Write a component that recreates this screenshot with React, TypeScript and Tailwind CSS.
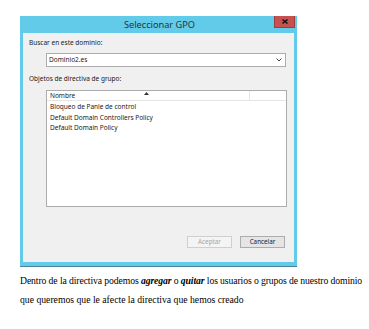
export default function App() {
  const rows = ['Bloqueo de Panle de control', 'Default Domain Controllers Policy', 'Default Domain Policy'];

  return (
    <div className="w-[369px] h-[329px] bg-white pt-[16px] pl-[20px] overflow-hidden">
      {/* dialog */}
      <div className="w-[277px] h-[251px] bg-[#62cbea] border-b border-[#4c8397] flex flex-col px-[3px] pb-[4px] font-['Noto_Sans',sans-serif]">
        <div className="h-[17px] flex items-center relative">
          <div className="flex-1 text-center text-[9.2px] text-[#26343c] leading-none pl-[2px] pt-[1px]">Seleccionar GPO</div>
          <div className="absolute right-[-1px] top-0 w-[21px] h-[12px] bg-[#c75050] border border-[#9c3e3e] border-t-0 flex items-center justify-center">
            <svg width="6" height="5" viewBox="0 0 6 5">
              <path d="M0.5 0.5 L5.5 4.5 M5.5 0.5 L0.5 4.5" stroke="#111" strokeWidth="1.4" />
            </svg>
          </div>
        </div>

        <div className="flex-1 bg-[#f0f0f0] flex flex-col text-[6.5px] text-[#1a1a1a] leading-[10px]">
          <div className="mt-[5px] pl-[6px]">Buscar en este dominio:</div>

          <div className="mt-[5px] ml-[23px] w-[240px] h-[14px] bg-white border border-[#acacac] flex items-center justify-between pl-[2px] pr-[3px]">
            <span>Dominio2.es</span>
            <svg width="6" height="4" viewBox="0 0 6 4">
              <path d="M0.5 0.5 L3 3 L5.5 0.5" fill="none" stroke="#444" strokeWidth="1" />
            </svg>
          </div>

          <div className="mt-[7px] pl-[6px]">Objetos de directiva de grupo:</div>

          <div className="mt-[6px] ml-[23px] w-[241px] h-[117px] bg-white border border-[#acacac] flex flex-col">
            <div className="h-[10px] flex border-b border-[#e5e5e5] relative">
              <div className="w-[203px] pl-[3px] border-r border-[#e5e5e5]">Nombre</div>
              <svg className="absolute left-[97px] top-[1px]" width="5" height="3" viewBox="0 0 5 3">
                <path d="M0 3 L2.5 0 L5 3 Z" fill="#333" />
              </svg>
            </div>
            {rows.map((r) => (
              <div key={r} className="h-[10.5px] pl-[3px] leading-[11px]">{r}</div>
            ))}
          </div>

          <div className="mt-[29px] ml-[164px] flex gap-[8px]">
            <div className="w-[45px] h-[12px] border border-[#cfcfcf] bg-[#f4f4f4] text-[#a6a6a6] text-center leading-[10px] text-[6.3px]">
              Aceptar
            </div>
            <div className="w-[45px] h-[12px] border border-[#adadad] bg-[#e5e5e5] text-center leading-[10px] text-[6.3px]">
              Cancelar
            </div>
          </div>
        </div>
      </div>

      <div className="mt-[4px] font-['Liberation_Serif',serif] text-[9.7px] text-black leading-[19px] whitespace-nowrap">
        <p className="tracking-[-0.1px]">
          Dentro de la directiva podemos <b><i>agregar</i></b> o <b><i>quitar</i></b> los usuarios o grupos de nuestro dominio
        </p>
        <p>que queremos que le afecte la directiva que hemos creado</p>
      </div>
    </div>
  );
}
